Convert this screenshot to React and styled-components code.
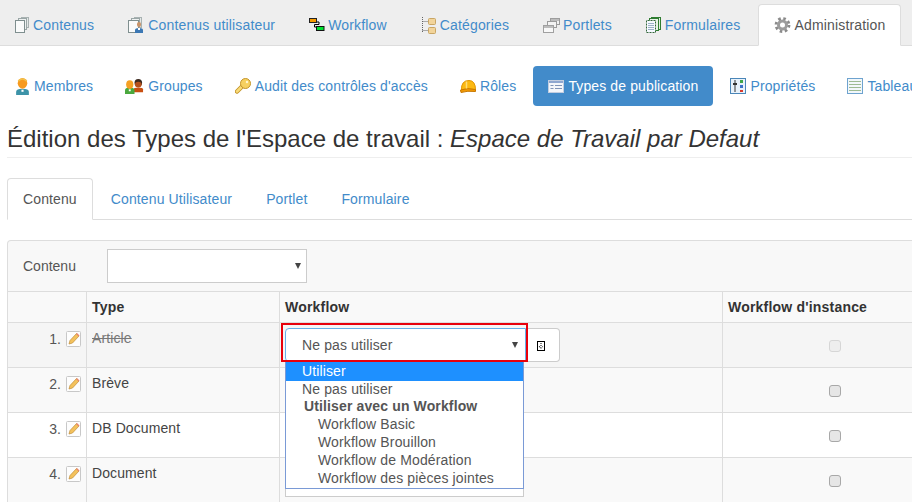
import React from 'react';
import styled, { createGlobalStyle } from 'styled-components';

const GlobalStyle = createGlobalStyle`
    html, body {
        margin:0;
        padding:0;
        overflow:hidden;
        background:#fff;
    }
    body {
        font-family:"Liberation Sans", Arial, sans-serif;
        font-size:14px;
        line-height:20px;
        color:#333;
    }
    * {box-sizing:border-box;}
`;

const IconPages = () => (
    <svg width="16" height="16" viewBox="0 0 16 16">
        <rect x="7.5" y="0.5" width="7" height="10" fill="#e4e8e8" stroke="#a8b2b2" />
        <rect x="4.5" y="1.5" width="8" height="11" fill="#eef1f1" stroke="#9aa6a6" />
        <rect x="1.5" y="3.5" width="9" height="12" fill="#fafbfb" stroke="#7f8f8f" />
    </svg>
);
const IconUserPages = () => (
    <svg width="17" height="16" viewBox="0 0 17 16">
        <rect x="6.5" y="0.5" width="7" height="10" fill="#e4e8e8" stroke="#a8b2b2" />
        <rect x="3.5" y="1.5" width="8" height="11" fill="#eef1f1" stroke="#9aa6a6" />
        <rect x="0.5" y="3.5" width="10" height="12" fill="#fafbfb" stroke="#7f8f8f" />
        <rect x="9" y="5" width="4" height="5" rx="2" fill="#c8946a" />
        <path d="M7 16v-3q0-2 4-2t4 2v3z" fill="#3c78b4" />
        <rect x="10" y="11" width="2" height="2" fill="#fff" />
    </svg>
);
const IconWorkflow = () => (
    <svg width="16" height="16" viewBox="0 0 16 16">
        <path d="M5 5h5v2.500H5.500v2.500h4" fill="none" stroke="#000" strokeWidth="1" />
        <rect x="0.500" y="1.500" width="7" height="4" fill="#f59a00" stroke="#222" />
        <rect x="7.500" y="9.500" width="7.500" height="4" fill="#00e030" stroke="#111" />
    </svg>
);
const IconTree = () => (
    <svg width="16" height="18" viewBox="0 0 16 18">
        <path d="M1.500 1v15M1.500 5.500h5M1.500 14.500h5" fill="none" stroke="#666" strokeDasharray="1 1" />
        <rect x="7.500" y="2.500" width="7" height="6" rx="1" fill="#f2d49a" stroke="#c9a665" />
        <rect x="7.500" y="11.500" width="7" height="6" rx="1" fill="#f2d49a" stroke="#c9a665" />
    </svg>
);
const IconPortlets = () => (
    <svg width="17" height="16" viewBox="0 0 17 16">
        <rect x="7.500" y="1.500" width="9" height="6" fill="#f2f2f2" stroke="#9c9c9c" />
        <rect x="4.500" y="4.500" width="9" height="6" fill="#f4f4f4" stroke="#9c9c9c" />
        <rect x="0.500" y="8.500" width="10" height="7" fill="#f8f8f8" stroke="#a0a0a0" />
        <rect x="1" y="9" width="9" height="2" fill="#bcbcbc" />
        <rect x="8" y="2" width="8" height="2" fill="#bcbcbc" />
    </svg>
);
const IconForms = () => (
    <svg width="16" height="16" viewBox="0 0 16 16">
        <rect x="5.500" y="0.500" width="9" height="12" fill="#e0eee0" stroke="#2f7d32" />
        <rect x="3.500" y="1.500" width="9" height="12" fill="#e8f2e8" stroke="#2f7d32" />
        <rect x="0.500" y="3.500" width="9" height="12" fill="#f6f9ff" stroke="#33663a" strokeDasharray="1 0.500" />
        <path d="M2 6.500h6M2 8.500h6M2 10.500h6M2 12.500h6" stroke="#9bb0c8" />
    </svg>
);
const IconGear = () => (
    <svg width="17" height="16" viewBox="0 0 16 16">
        <circle cx="8" cy="8" r="6.400" fill="none" stroke="#8a8a8a" strokeWidth="3" strokeDasharray="2.500 2.530" />
        <circle cx="8" cy="8" r="4" fill="none" stroke="#9c9c9c" strokeWidth="3" />
    </svg>
);
const IconMember = () => (
    <svg width="15" height="17" viewBox="0 0 14 16">
        <path d="M1 16v-3q0-3 6-3t6 3v3z" fill="#3d93a8" />
        <ellipse cx="7" cy="5" rx="4.500" ry="5" fill="#f79a1e" />
        <path d="M3 3q4-4 8 0" fill="none" stroke="#f3c04c" strokeWidth="1.500" />
        <rect x="6" y="11" width="2" height="2" fill="#fff" />
    </svg>
);
const IconGroup = () => (
    <svg width="19" height="17" viewBox="0 0 20 16">
        <ellipse cx="14" cy="4" rx="4" ry="4" fill="#3c2a20" />
        <ellipse cx="14" cy="6" rx="3.500" ry="3" fill="#b5501c" />
        <path d="M9 14v-3q0-2 5-2t5 2v3z" fill="#c94f12" />
        <path d="M0 16v-4q0-3 5-3t5 3v4z" fill="#4aa83e" />
        <ellipse cx="5" cy="6" rx="3.800" ry="4.500" fill="#f5a023" />
        <rect x="4" y="11" width="2" height="2" fill="#fff" />
    </svg>
);
const IconKey = () => (
    <svg width="16" height="16" viewBox="0 0 16 16">
        <path d="M2 13.500l6-6" fill="none" stroke="#c4942a" strokeWidth="4.500" strokeLinecap="round" />
        <path d="M2 13.500l6-6" fill="none" stroke="#f9dc78" strokeWidth="2.500" strokeLinecap="round" />
        <circle cx="10.500" cy="5.500" r="5" fill="#f6d060" stroke="#c4942a" />
        <circle cx="12" cy="4" r="1.200" fill="#fff6d0" />
    </svg>
);
const IconHelmet = () => (
    <svg width="16" height="16" viewBox="0 0 16 16">
        <path d="M1.500 12Q1 2.500 9 2.500q6.500 0 6.500 9.500z" fill="#fcb912" stroke="#e09400" />
        <path d="M0.500 12q7-2.500 15-0.500v2q-8-1-14.500 1z" fill="#f29a05" stroke="#c87800" />
        <path d="M6.500 3.500v7" stroke="#ffdc78" strokeWidth="1.500" />
    </svg>
);
const IconTypes = () => (
    <svg width="16" height="14" viewBox="0 0 16 14">
        <rect x="0.500" y="1.500" width="15" height="12" fill="#f4f6fa" stroke="#c2cde0" />
        <rect x="1" y="2" width="14" height="2" fill="#8fa7d0" />
        <path d="M2.500 6.500h3M2.500 9.500h3M7 6.500h7M7 9.500h7" stroke="#8094b8" />
    </svg>
);
const IconProps = () => (
    <svg width="16" height="16" viewBox="0 0 16 16">
        <rect x="0.500" y="0.500" width="15" height="15" fill="#e8f2fb" stroke="#4a86b8" />
        <path d="M5 2v12" stroke="#333" />
        <path d="M3 6h4" stroke="#333" strokeWidth="2" />
        <rect x="10" y="2" width="3" height="3" fill="#3fa648" />
        <rect x="10" y="7" width="3" height="3" fill="#3a72c8" />
        <rect x="10" y="12" width="3" height="2" fill="#d83a2e" />
    </svg>
);
const IconTable = () => (
    <svg width="16" height="16" viewBox="0 0 16 16">
        <rect x="0.500" y="0.500" width="15" height="15" fill="#f2f7fb" stroke="#6ea3cf" />
        <path d="M2 3.500h12M2 6.500h12M2 9.500h12M2 12.500h12" stroke="#9dbb93" />
    </svg>
);
const IconEdit = () => (
    <svg width="15" height="16" viewBox="0 0 15 16">
        <rect x="0.500" y="0.500" width="14" height="15" rx="1" fill="#fdfdfd" stroke="#c8c8c8" />
        <path d="M3 13l1-3.500 6.500-7 2.500 2.500-6.500 7z" fill="#f4c25c" stroke="#c08c38" strokeWidth="0.700" />
        <path d="M10.500 2.500l2.500 2.500" stroke="#e8846c" strokeWidth="1.400" />
    </svg>
);
const IconDoc = () => (
    <svg width="8" height="10" viewBox="0 0 8 10">
        <rect x="0.500" y="0.500" width="7" height="9" fill="#fff" stroke="#000" />
        <path d="M4 2v3" stroke="#000" strokeDasharray="1 1" />
        <path d="M2 5l2 2.500L6 5" fill="none" stroke="#000" strokeDasharray="1 0.600" />
    </svg>
);

const mainTabs = [
    { label: 'Contenus', icon: <IconPages /> },
    { label: 'Contenus utilisateur', icon: <IconUserPages /> },
    { label: 'Workflow', icon: <IconWorkflow /> },
    { label: 'Catégories', icon: <IconTree /> },
    { label: 'Portlets', icon: <IconPortlets /> },
    { label: 'Formulaires', icon: <IconForms /> },
    { label: 'Administration', icon: <IconGear />, active: true },
];
const pills = [
    { label: 'Membres', icon: <IconMember /> },
    { label: 'Groupes', icon: <IconGroup /> },
    { label: "Audit des contrôles d'accès", icon: <IconKey /> },
    { label: 'Rôles', icon: <IconHelmet /> },
    { label: 'Types de publication', icon: <IconTypes />, active: true },
    { label: 'Propriétés', icon: <IconProps /> },
    { label: 'Tableau', icon: <IconTable /> },
];
const subTabs = ['Contenu', 'Contenu Utilisateur', 'Portlet', 'Formulaire'];
const rows = [
    { name: 'Article', disabled: true },
    { name: 'Brève' },
    { name: 'DB Document' },
    { name: 'Document' },
];
const options = [
    { label: 'Utiliser', kind: 'selected' },
    { label: 'Ne pas utiliser', kind: 'plain' },
    { label: 'Utiliser avec un Workflow', kind: 'group' },
    { label: 'Workflow Basic', kind: 'child' },
    { label: 'Workflow Brouillon', kind: 'child' },
    { label: 'Workflow de Modération', kind: 'child' },
    { label: 'Workflow des pièces jointes', kind: 'child' },
];

function App() {
    return (
        <Page>
            <GlobalStyle />
            <TopBar>
                {mainTabs.map((tab) => (
                    <MainTab key={tab.label} $active={tab.active}>
                        {tab.icon}
                        {tab.label}
                    </MainTab>
                ))}
            </TopBar>
            <PillBar>
                {pills.map((pill) => (
                    <Pill key={pill.label} $active={pill.active}>
                        {pill.icon}
                        {pill.label}
                    </Pill>
                ))}
            </PillBar>
            <Content>
                <Title>Édition des Types de l'Espace de travail : <em>Espace de Travail par Defaut</em></Title>
                <SubTabs>
                    {subTabs.map((tab, i) => (
                        <SubTab key={tab} $active={i === 0}>{tab}</SubTab>
                    ))}
                </SubTabs>
                <Panel>
                    <FilterRow>
                        <FilterLabel>Contenu</FilterLabel>
                        <FilterSelect />
                    </FilterRow>
                    <Table>
                        <colgroup>
                            <col width="79" />
                            <col width="193" />
                            <col width="443" />
                            <col width="226" />
                        </colgroup>
                        <thead>
                            <tr>
                                <th />
                                <th>Type</th>
                                <th>Workflow</th>
                                <th>Workflow d'instance</th>
                            </tr>
                        </thead>
                        <tbody>
                            {rows.map((row, i) => (
                                <Row key={row.name} $index={i}>
                                    <NumberCell>
                                        <span>{i + 1}.</span>
                                        <IconEdit />
                                    </NumberCell>
                                    <TypeCell $disabled={row.disabled}>{row.name}</TypeCell>
                                    <WorkflowCell>
                                        {i === 0 && (
                                            <>
                                                <SelectGroup>
                                                    <WorkflowSelect $focused>Ne pas utiliser</WorkflowSelect>
                                                    <DocButton><IconDoc /></DocButton>
                                                </SelectGroup>
                                                <RedFrame />
                                                <Dropdown>
                                                    {options.map((option) => (
                                                        <Option key={option.label} $kind={option.kind}>{option.label}</Option>
                                                    ))}
                                                </Dropdown>
                                            </>
                                        )}
                                        {i === 3 && <WorkflowSelect />}
                                    </WorkflowCell>
                                    <CheckCell>
                                        <CheckBox $disabled={row.disabled} />
                                    </CheckCell>
                                </Row>
                            ))}
                        </tbody>
                    </Table>
                </Panel>
            </Content>
        </Page>
    );
}

const Page = styled.div`
    width:912px;
    height:502px;
    overflow:hidden;
`;
const TopBar = styled.div`
    display:flex;
    gap:2px;
    height:46px;
    padding-top:4px;
    margin-left:-2px;
    background:#eee;
    border-bottom:1px solid #ddd;
    white-space:nowrap;
    letter-spacing:.16px;
`;
const MainTab = styled.div`
    display:flex;
    align-items:center;
    gap:3px;
    height:42px;
    padding:0 15px;
    border:1px solid transparent;
    border-radius:4px 4px 0 0;
    color:${(props) => (props.$active ? '#555' : '#428bca')};
    background:${(props) => (props.$active ? '#fff' : 'transparent')};
    border-color:${(props) => (props.$active ? '#ddd #ddd #fff' : 'transparent')};
`;
const PillBar = styled.div`
    display:flex;
    gap:2px;
    margin-top:20px;
    white-space:nowrap;
    letter-spacing:.12px;
`;
const Pill = styled.div`
    display:flex;
    align-items:center;
    gap:4px;
    height:40px;
    padding:0 15px;
    border-radius:4px;
    color:${(props) => (props.$active ? '#fff' : '#428bca')};
    background:${(props) => (props.$active ? '#428bca' : 'transparent')};
`;
const Content = styled.div`
    padding-left:7px;
    width:948px;
`;
const Title = styled.h1`
    margin:16px 0 20px;
    height:36px;
    font-size:24px;
    line-height:33px;
    font-weight:normal;
    color:#333;
    border-bottom:1px solid #eee;
    white-space:nowrap;
`;
const SubTabs = styled.div`
    display:flex;
    gap:2px;
    height:42px;
    border-bottom:1px solid #ddd;
    letter-spacing:.12px;
`;
const SubTab = styled.div`
    height:42px;
    padding:10px 15px;
    border:1px solid transparent;
    border-radius:4px 4px 0 0;
    color:${(props) => (props.$active ? '#555' : '#428bca')};
    background:${(props) => (props.$active ? '#fff' : 'transparent')};
    border-color:${(props) => (props.$active ? '#ddd #ddd #fff' : 'transparent')};
`;
const Panel = styled.div`
    margin-top:20px;
    border:1px solid #ddd;
    border-bottom:none;
    border-radius:4px 4px 0 0;
    background:#f8f8f8;
`;
const FilterRow = styled.div`
    display:flex;
    align-items:center;
    height:50px;
    padding-left:15px;
`;
const FilterLabel = styled.label`
    width:84px;
    color:#555;
`;
const FilterSelect = styled.div`
    position:relative;
    width:200px;
    height:34px;
    margin-bottom:1px;
    background:#fff;
    border:1px solid #ccc;

    &::after {
        content:'';
        position:absolute;
        right:5px;
        top:13px;
        border:3.5px solid transparent;
        border-top:6px solid #444;
        border-bottom:none;
    }
`;
const Table = styled.table`
    width:941px;
    table-layout:fixed;
    border-collapse:collapse;
    margin-left:-1px;

    th {
        height:31px;
        padding:0 5px;
        text-align:left;
        font-weight:bold;
        letter-spacing:.2px;
        background:#f9f9f9;
        border:1px solid #ddd;
    }
`;
const Row = styled.tr`
    background:${(props) => {
        if (props.$index === 0) return '#f5f5f5';
        return props.$index % 2 === 1 ? '#f9f9f9' : '#fff';
    }};

    td {
        height:45px;
        padding:5px;
        vertical-align:top;
        border:1px solid #ddd;
    }
`;
const NumberCell = styled.td`
    color:#555;
    text-align:right;

    && {
        padding:6px 5px 0 0;
    }

    span {margin-right:5px;}
    svg {vertical-align:-3px;}
`;
const TypeCell = styled.td`
    color:${(props) => (props.$disabled ? '#777' : '#444')};
    text-decoration:${(props) => (props.$disabled ? 'line-through' : 'none')};
    letter-spacing:.1px;
`;
const WorkflowCell = styled.td`
    position:relative;
`;
const SelectGroup = styled.div`
    display:flex;
`;
const WorkflowSelect = styled.div`
    position:relative;
    width:${(props) => (props.$focused ? '241px' : '239px')};
    height:34px;
    padding:6px 16px;
    color:#555;
    letter-spacing:.12px;
    background:#fff;
    border:1px solid ${(props) => (props.$focused ? '#66afe9' : '#ccc')};
    border-radius:${(props) => (props.$focused ? '4px 0 0 4px' : '0')};

    &::after {
        content:${(props) => (props.$focused ? "''" : 'none')};
        position:absolute;
        right:7px;
        top:13px;
        border:3.5px solid transparent;
        border-top:6px solid #444;
        border-bottom:none;
    }
`;
const DocButton = styled.div`
    display:flex;
    align-items:center;
    justify-content:center;
    width:34px;
    height:34px;
    padding:2px 4px 0 0;
    background:#fff;
    border:1px solid #ccc;
    border-left:none;
    border-radius:0 4px 4px 0;
`;
const RedFrame = styled.div`
    position:absolute;
    left:1px;
    top:0;
    width:247px;
    height:39px;
    border:2px solid #e8000b;
    pointer-events:none;
`;
const Dropdown = styled.div`
    position:absolute;
    left:5px;
    top:39px;
    width:239px;
    padding-bottom:1px;
    background:#fff;
    border:1px solid #7a9ad6;
    border-top:none;
    letter-spacing:.13px;
    z-index:2;
`;
const optionIndent = { selected: '16px', plain: '16px', group: '18px', child: '32px' };
const optionHeight = { selected: '19px', plain: '17px', group: '17px', child: '18px' };
const Option = styled.div`
    height:${(props) => optionHeight[props.$kind]};
    line-height:${(props) => (props.$kind === 'child' || props.$kind === 'selected' ? '18px' : '17px')};
    padding-left:${(props) => optionIndent[props.$kind]};
    font-weight:${(props) => (props.$kind === 'group' ? 'bold' : 'normal')};
    color:${(props) => (props.$kind === 'selected' ? '#fff' : '#555')};
    background:${(props) => (props.$kind === 'selected' ? '#1e90ff' : 'transparent')};
`;
const CheckCell = styled.td`
    text-align:center;
`;
const CheckBox = styled.div`
    display:inline-block;
    width:12px;
    height:12px;
    margin-top:12px;
    margin-right:2px;
    border-radius:3px;
    border:1px solid ${(props) => (props.$disabled ? '#d6d6d6' : '#a8a8a8')};
    background:${(props) => (props.$disabled ? '#eee' : '#e6e6e6')};
`;

export default App;
